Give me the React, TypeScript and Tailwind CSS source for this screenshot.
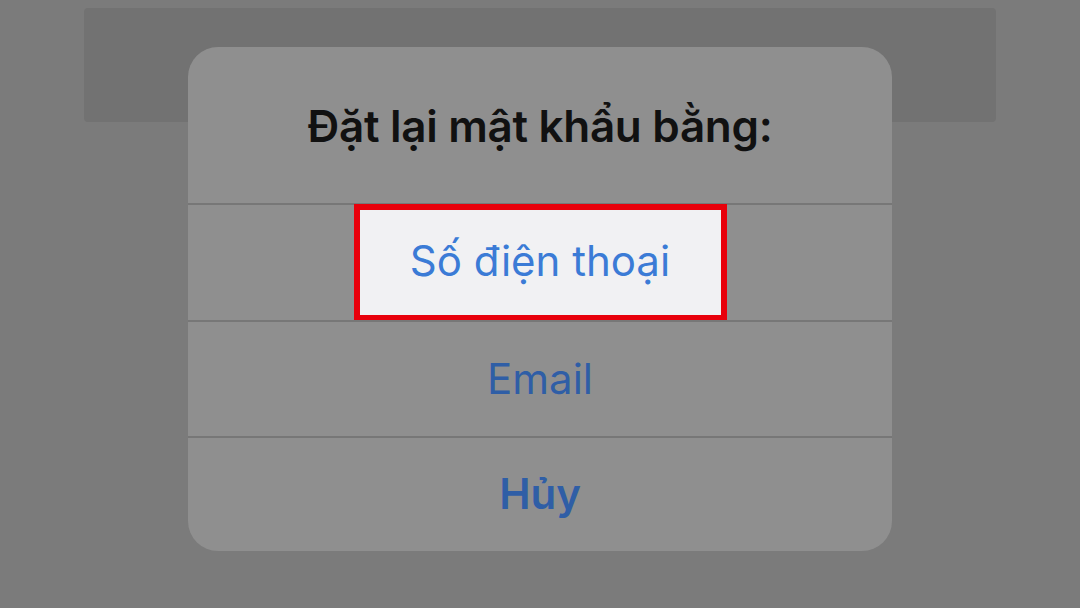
import React from "react";

const font = { fontFamily: "Inter, 'Noto Sans', 'DejaVu Sans', sans-serif" };

export default function App() {
  return (
    <div
      className="relative w-[1080px] h-[608px] overflow-hidden bg-[#7b7b7b]"
      style={font}
    >
      {/* page content behind the sheet */}
      <div className="px-[84px] pt-[8px]">
        <div className="h-[114px] rounded-[4px] bg-[#727272]" />
      </div>

      {/* alert */}
      <div className="absolute left-[188px] top-[47px] w-[704px] h-[504px] rounded-[30px] bg-[#8f8f8f] flex flex-col overflow-hidden">
        <div className="h-[156px] flex items-center justify-center pt-[2px]">
          <h2 className="text-[44px] leading-none font-semibold text-[#111] tracking-[-0.3px]">
            Đặt lại mật khẩu bằng:
          </h2>
        </div>
        <div className="h-[2px] bg-[#777]" />
        <div className="h-[115px] flex items-center justify-center">
          <div className="w-[373px] h-[117px] -mt-[1px] border-[6px] border-[#e8000b] bg-[#f1f1f3] flex items-center justify-center">
            <span className="text-[42px] leading-none text-[#3b7bd6] pb-[2px]">Số điện thoại</span>
          </div>
        </div>
        <div className="h-[2px] bg-[#777]" />
        <div className="h-[114px] flex items-center justify-center">
          <span className="text-[42px] leading-none text-[#2f5ea6]">Email</span>
        </div>
        <div className="h-[2px] bg-[#777]" />
        <div className="flex-1 flex items-center justify-center pb-[2px]">
          <span className="text-[42px] leading-none font-semibold text-[#2f5ea6]">Hủy</span>
        </div>
      </div>
    </div>
  );
}
